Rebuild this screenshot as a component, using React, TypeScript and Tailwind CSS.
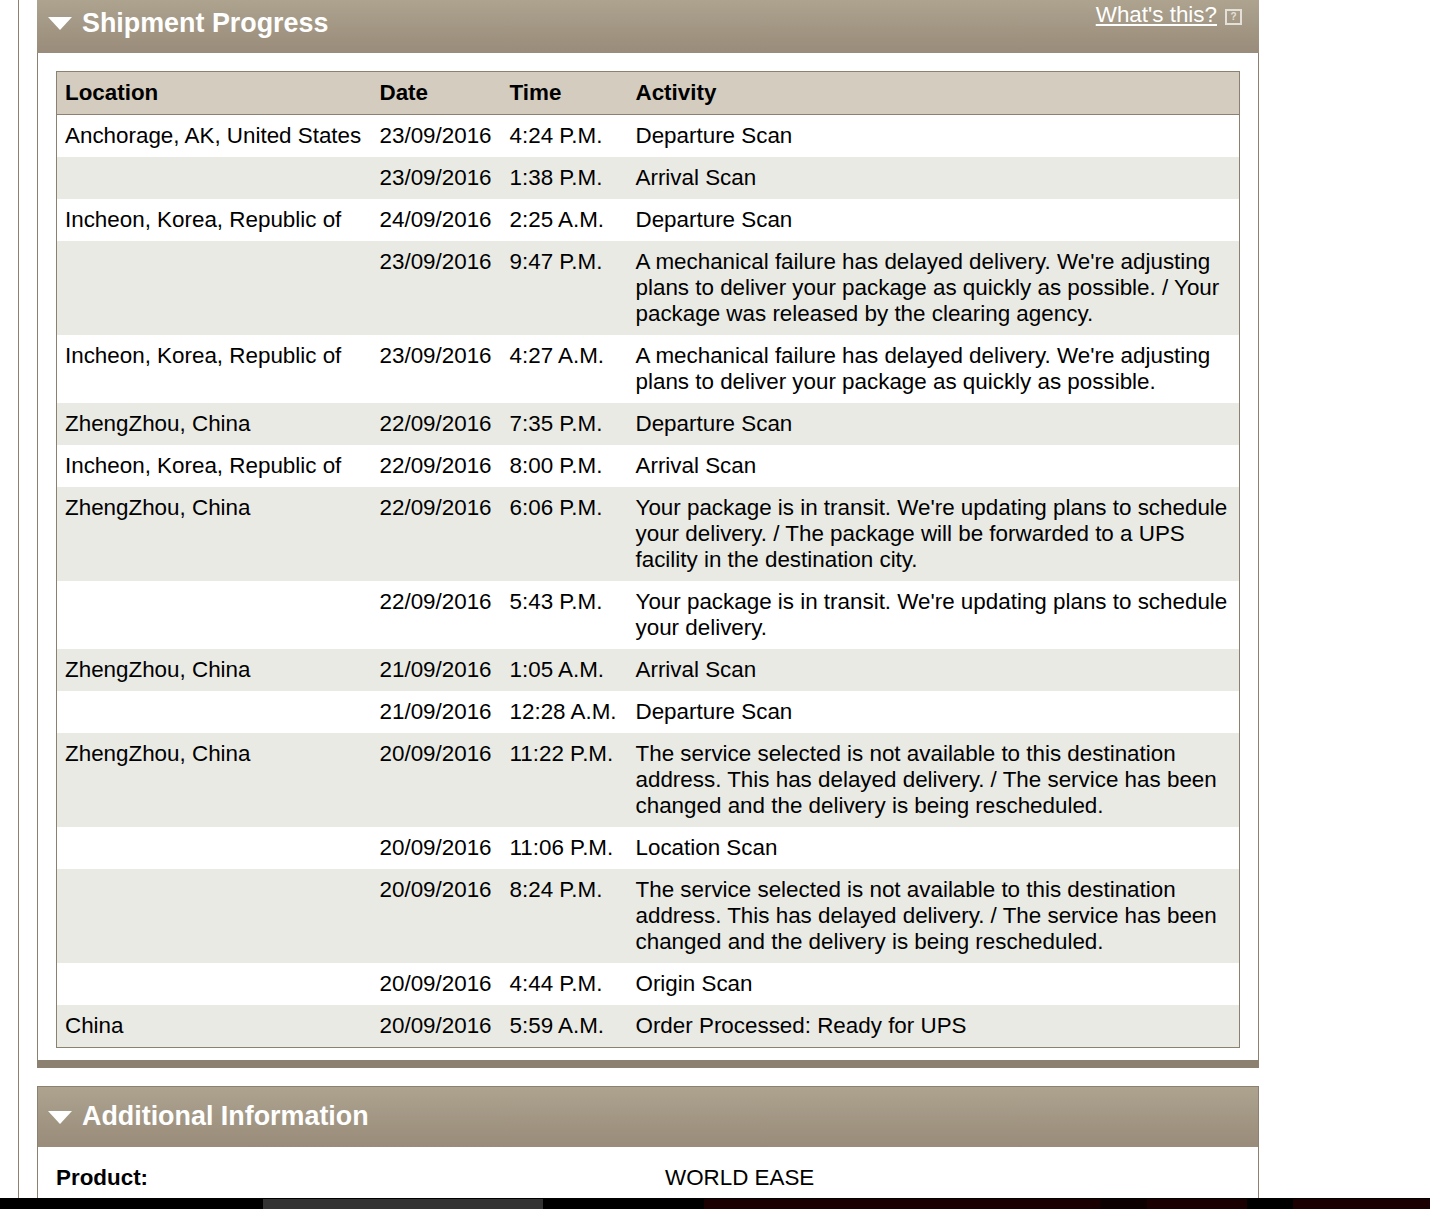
const rows = [
  { location: "Anchorage, AK, United States", date: "23/09/2016", time: "4:24 P.M.", activity: "Departure Scan" },
  { location: "", date: "23/09/2016", time: "1:38 P.M.", activity: "Arrival Scan" },
  { location: "Incheon, Korea, Republic of", date: "24/09/2016", time: "2:25 A.M.", activity: "Departure Scan" },
  { location: "", date: "23/09/2016", time: "9:47 P.M.", activity: "A mechanical failure has delayed delivery. We're adjusting plans to deliver your package as quickly as possible. / Your package was released by the clearing agency." },
  { location: "Incheon, Korea, Republic of", date: "23/09/2016", time: "4:27 A.M.", activity: "A mechanical failure has delayed delivery. We're adjusting plans to deliver your package as quickly as possible." },
  { location: "ZhengZhou, China", date: "22/09/2016", time: "7:35 P.M.", activity: "Departure Scan" },
  { location: "Incheon, Korea, Republic of", date: "22/09/2016", time: "8:00 P.M.", activity: "Arrival Scan" },
  { location: "ZhengZhou, China", date: "22/09/2016", time: "6:06 P.M.", activity: "Your package is in transit. We're updating plans to schedule your delivery. / The package will be forwarded to a UPS facility in the destination city." },
  { location: "", date: "22/09/2016", time: "5:43 P.M.", activity: "Your package is in transit. We're updating plans to schedule your delivery." },
  { location: "ZhengZhou, China", date: "21/09/2016", time: "1:05 A.M.", activity: "Arrival Scan" },
  { location: "", date: "21/09/2016", time: "12:28 A.M.", activity: "Departure Scan" },
  { location: "ZhengZhou, China", date: "20/09/2016", time: "11:22 P.M.", activity: "The service selected is not available to this destination address. This has delayed delivery. / The service has been changed and the delivery is being rescheduled." },
  { location: "", date: "20/09/2016", time: "11:06 P.M.", activity: "Location Scan" },
  { location: "", date: "20/09/2016", time: "8:24 P.M.", activity: "The service selected is not available to this destination address. This has delayed delivery. / The service has been changed and the delivery is being rescheduled." },
  { location: "", date: "20/09/2016", time: "4:44 P.M.", activity: "Origin Scan" },
  { location: "China", date: "20/09/2016", time: "5:59 A.M.", activity: "Order Processed: Ready for UPS" },
];

function Triangle() {
  return (
    <svg width="24" height="14" viewBox="0 0 24 14" className="mt-[1px] shrink-0">
      <polygon points="0,0 24,0 12,13" fill="#ffffff" />
    </svg>
  );
}

export default function App() {
  return (
    <div className="flex h-[1209px] flex-col overflow-hidden bg-white font-['Liberation_Sans',Arial,sans-serif] text-[22.4px] leading-[26px] text-black">
      <div className="ml-[18px] h-[1198px] overflow-hidden border-l border-[#8c8070] pl-[18px]">
        <div className="w-[1222px]">
          {/* Shipment progress */}
          <div className="flex h-[53px] items-start justify-between bg-gradient-to-b from-[#ada38f] to-[#998c7a] pl-[11px] pr-[17px]">
            <div className="flex items-center gap-[10px] pt-[6px]">
              <Triangle />
              <h2 className="text-[26.88px] font-bold leading-[34px] text-white">Shipment Progress</h2>
            </div>
            <div className="flex items-start gap-[8px] pt-[2px]">
              <a href="#" className="text-white underline">What's this?</a>
              <span className="mt-[7px] flex h-[16px] w-[17px] items-center justify-center border-2 border-[#e4e0d9] text-[10px] font-bold leading-none text-[#e4e0d9]">?</span>
            </div>
          </div>
          <div className="border-x border-[#8c8070] bg-white px-[18px] pb-[12px] pt-[18px]">
            <table className="w-full table-fixed border-collapse border border-[#8c8070]">
              <colgroup>
                <col className="w-[315px]" />
                <col className="w-[130px]" />
                <col className="w-[126px]" />
                <col />
              </colgroup>
              <thead>
                <tr className="border-b border-[#8c8070] bg-[#d4ccbf] text-left">
                  <th className="p-[8px] font-bold">Location</th>
                  <th className="p-[8px] font-bold">Date</th>
                  <th className="p-[8px] font-bold">Time</th>
                  <th className="p-[8px] font-bold">Activity</th>
                </tr>
              </thead>
              <tbody>
                {rows.map((row, i) => (
                  <tr key={i} className={i % 2 === 1 ? "bg-[#e9eae4]" : "bg-white"}>
                    <td className="p-[8px] align-top">{row.location}</td>
                    <td className="p-[8px] align-top">{row.date}</td>
                    <td className="p-[8px] align-top">{row.time}</td>
                    <td className="p-[8px] align-top">{row.activity}</td>
                  </tr>
                ))}
              </tbody>
            </table>
          </div>
          <div className="h-[8px] bg-[#8c8070]" />

          {/* Additional information */}
          <div className="mt-[18px] flex h-[61px] items-start gap-[10px] border-x border-t border-[#8c8070] bg-gradient-to-b from-[#ada38f] to-[#998c7a] pl-[10px] pt-[11px]">
            <div className="pt-[12px]">
              <Triangle />
            </div>
            <h2 className="mt-[1px] text-[26.88px] font-bold leading-[34px] text-white">Additional Information</h2>
          </div>
          <div className="flex h-[60px] border-x border-[#8c8070] bg-white pl-[18px] pt-[18px]">
            <span className="w-[609px] font-bold">Product:</span>
            <span>WORLD EASE</span>
          </div>
        </div>
      </div>

      {/* Footer strip */}
      <div className="flex h-[11px] border-t border-black bg-black">
        <div className="w-[263px]" />
        <div className="w-[280px] bg-[#333333]" />
        <div className="w-[161px]" />
        <div className="w-[396px] bg-[#1a0000]" />
        <div className="w-[47px] bg-[#0d0000]" />
        <div className="w-[100px] bg-[#1a0000]" />
        <div className="w-[46px]" />
        <div className="flex-1 bg-[#1a0000]" />
      </div>
    </div>
  );
}
